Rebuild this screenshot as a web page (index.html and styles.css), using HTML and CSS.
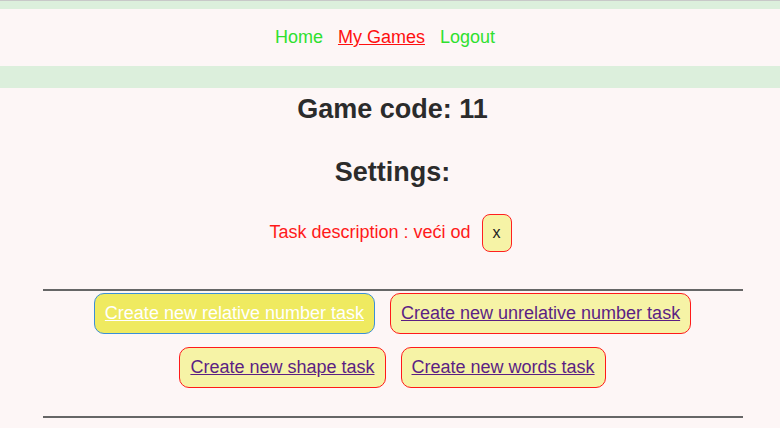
FILE: index.html
```html
<!DOCTYPE html>
<html>
<head>
<meta charset="utf-8">
<link rel="stylesheet" href="styles.css">
</head>
<body>
<div class="topband"></div>
<nav class="nav">
  <a class="nav-link" href="#">Home</a>
  <a class="nav-link active" href="#">My Games</a>
  <a class="nav-link" href="#">Logout</a>
</nav>
<div class="band"></div>
<main class="content">
  <h2 class="title">Game code: 11</h2>
  <h2 class="title settings">Settings:</h2>
  <div class="task">
    <span class="task-text">Task description : veći od</span>
    <button class="xbtn">x</button>
  </div>
  <hr class="rule">
  <div class="actions">
    <div class="row">
      <span class="btn hover"><a href="#">Create new relative number task</a></span>
      <span class="btn"><a href="#">Create new unrelative number task</a></span>
    </div>
    <div class="row">
      <span class="btn"><a href="#">Create new shape task</a></span>
      <span class="btn"><a href="#">Create new words task</a></span>
    </div>
  </div>
  <hr class="rule last">
</main>
</body>
</html>
```
FILE: styles.css
```css
html, body {
  margin: 0;
  padding: 0;
  background: #fdf6f6;
  font-family: "Liberation Sans", Arial, sans-serif;
}
.topband {
  height: 9px;
  background: #dcefdc;
  border-top: 1px solid #c8c8c8;
  box-sizing: border-box;
}
.nav {
  height: 57px;
  display: flex;
  justify-content: center;
  align-items: center;
  gap: 15px;
  font-size: 18px;
  padding-right: 10px;
}
.nav-link {
  color: #2fe02f;
  text-decoration: none;
}
.nav-link.active {
  color: #ff1010;
  text-decoration: underline;
}
.band {
  height: 22px;
  background: #dcefdc;
}
.content {
  display: flex;
  flex-direction: column;
  align-items: center;
  padding-left: 5px;
}
.title {
  margin: 4px 0 0;
  font-size: 27px;
  line-height: 34px;
  color: #2b2b2b;
  font-weight: bold;
}
.title.settings {
  margin-top: 29px;
}
.task {
  margin-top: 25px;
  margin-right: 4px;
  display: flex;
  align-items: center;
  gap: 11px;
  color: #ff1a1a;
  font-size: 18px;
}
.task-text {
  margin-bottom: 2px;
}
.xbtn {
  width: 30px;
  height: 38px;
  background: #f6f3a6;
  border: 1px solid #ff2020;
  border-radius: 8px;
  font-family: "Liberation Sans", Arial, sans-serif;
  font-size: 16px;
  color: #222;
  padding: 0;
}
.rule {
  width: 700px;
  margin: 37px 0 0;
  border: 0;
  border-top: 2px solid #666;
  height: 0;
}
.actions {
  display: flex;
  flex-direction: column;
  align-items: center;
  gap: 13px;
  margin-top: 2px;
}
.row {
  display: flex;
  gap: 15px;
}
.btn {
  display: inline-block;
  background: #f6f3a6;
  border: 1px solid #ff1a1a;
  border-radius: 10px;
  padding: 9px 10px 9px;
  font-size: 18px;
  line-height: 21px;
}
.btn a {
  color: #5b1f84;
}
.btn.hover {
  background: #efea60;
  border-color: #3a8fd8;
}
.btn.hover a {
  color: #ffffff;
}
.rule.last {
  margin-top: 28px;
}
```
